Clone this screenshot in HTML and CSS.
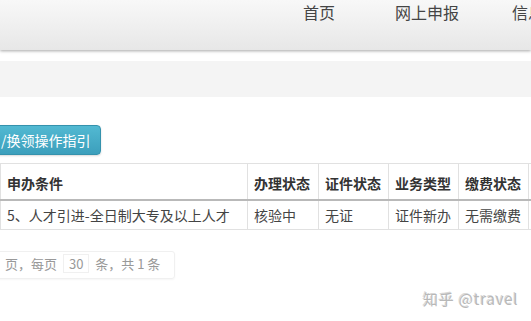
FILE: index.html
```html
<!DOCTYPE html>
<html lang="zh-CN">
<head>
    <meta charset="UTF-8">
    <title>申办进度查询</title>
    <link rel="stylesheet" href="styles.css">
</head>
<body>

    <div class="topbar">
        <ul class="nav">
            <li>首页</li>
            <li>网上申报</li>
            <li>信息查询</li>
        </ul>
    </div>

    <div class="crumb"></div>

    <div class="content">
        <button class="guide-btn">/换领操作指引</button>

        <table class="result-table">
            <colgroup>
                <col style="width: 247px">
                <col style="width: 71px">
                <col style="width: 70px">
                <col style="width: 70px">
                <col style="width: 70px">
                <col style="width: 90px">
            </colgroup>
            <thead>
                <tr>
                    <th>申办条件</th>
                    <th>办理状态</th>
                    <th>证件状态</th>
                    <th>业务类型</th>
                    <th>缴费状态</th>
                    <th></th>
                </tr>
            </thead>
            <tbody>
                <tr>
                    <td>5、人才引进-全日制大专及以上人才</td>
                    <td>核验中</td>
                    <td>无证</td>
                    <td>证件新办</td>
                    <td>无需缴费</td>
                    <td></td>
                </tr>
            </tbody>
        </table>

        <div class="pager">
            页，每页 <span class="page-size">30</span> 条，共 1 条
        </div>
    </div>

    <div class="watermark">知乎 @travel</div>

</body>
</html>
```

FILE: styles.css
```css
body {
    margin: 0;
    font-family: "Noto Sans CJK SC", "DejaVu Sans", sans-serif;
    color: #333;
    background-color: white;
    overflow: hidden;
    position: relative;
    width: 531px;
    height: 321px;
}

.topbar {
    height: 50px;
    background: linear-gradient(#f8f8f8, #e7e7e7);
    box-shadow: 0 1px 3px rgba(0, 0, 0, 0.35);
    overflow: hidden;
}

.nav {
    list-style: none;
    margin: 0 0 0 303px;
    padding: 0;
    display: flex;
    gap: 60px;
    white-space: nowrap;
}

    .nav li {
        font-size: 16px;
        line-height: 16px;
        padding-top: 4px;
        color: #444;
    }

    .nav li:last-child {
        margin-left: -7px;
    }

.crumb {
    margin-top: 11px;
    height: 36px;
    background-color: #f4f4f4;
}

.content {
    padding-top: 28px;
}

.guide-btn {
    display: block;
    margin-left: -6px;
    height: 30px;
    padding: 0 9px 0 6px;
    font-family: inherit;
    font-size: 14px;
    color: white;
    background: linear-gradient(#52b9d2, #3c9fbc);
    border: 1px solid #3592ad;
    border-radius: 4px;
    box-shadow: 0 1px 2px rgba(0, 0, 0, 0.15);
}

.result-table {
    margin-top: 8px;
    border-collapse: collapse;
    table-layout: fixed;
    width: 618px;
    font-size: 14px;
}

    .result-table th,
    .result-table td {
        border: 1px solid #e1e1e1;
        text-align: left;
        padding: 0 6px;
        white-space: nowrap;
        overflow: hidden;
    }

    .result-table th {
        height: 33px;
        font-weight: bold;
        color: #333;
        border-bottom: 2px solid #b9b9b9;
        padding-top: 2px;
    }

    .result-table td {
        height: 28px;
        color: #444;
    }

.pager {
    margin: 21px 0 0 -20px;
    width: 195px;
    height: 28px;
    padding-left: 24px;
    box-sizing: border-box;
    border: 1px solid #f0f0f0;
    border-radius: 3px;
    box-shadow: 0 1px 2px rgba(0, 0, 0, 0.04);
    font-size: 13px;
    line-height: 24px;
    color: #999;
}

.page-size {
    display: inline-block;
    border: 1px solid #f0f0f0;
    padding: 0 5px;
    line-height: 17px;
    margin: 0 3px;
}

.watermark {
    position: absolute;
    left: 423px;
    top: 288px;
    font-size: 15px;
    color: #b8b8b8;
    text-shadow: 1px 1px 0 white, -1px -1px 0 #d8d8d8;
    letter-spacing: 0.8px;
}
```
